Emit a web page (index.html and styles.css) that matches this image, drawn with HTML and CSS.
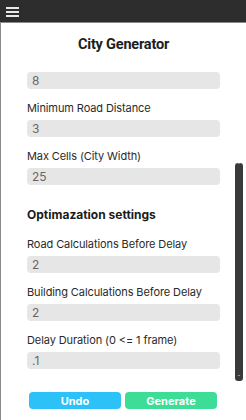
FILE: index.html
```html
<!DOCTYPE html>
<html lang="en">
<head>
    <meta charset="UTF-8">
    <meta name="viewport" content="width=device-width, initial-scale=1.0">
    <title>City Generator</title>
    <link rel="stylesheet" href="styles.css">
</head>
<body>
    <!-- Top bar -->
    <div class="topbar">
        <div class="menu-btn">
            <span></span><span></span><span></span>
        </div>
    </div>

    <div class="panel">
        <h1>City Generator</h1>

        <div class="settings">
            <input type="text" value="8">

            <label>Minimum Road Distance</label>
            <input type="text" value="3">

            <label>Max Cells (City Width)</label>
            <input type="text" value="25">

            <h2>Optimazation settings</h2>

            <label>Road Calculations Before Delay</label>
            <input type="text" value="2">

            <label>Building Calculations Before Delay</label>
            <input type="text" value="2">

            <label>Delay Duration (0 &lt;= 1 frame)</label>
            <input type="text" value=".1">
        </div>

        <div class="scrollbar"><span class="up">&#710;</span><span class="down">&#711;</span></div>

        <div class="actions">
            <button class="undo">Undo</button>
            <button class="generate">Generate</button>
        </div>
    </div>
</body>
</html>
```

FILE: styles.css
```css
* {
    margin: 0;
    padding: 0;
    box-sizing: border-box;
}

body {
    font-family: 'Inter', 'Open Sans', sans-serif;
    background-color: #fff;
    color: #222;
    width: 246px;
    height: 420px;
    overflow: hidden;
}

/* Top bar */
.topbar {
    height: 23px;
    background-color: #2d2d2d;
    border-bottom: 1px solid #8a8a8a;
    padding: 7px 0 0 6px;
}

.menu-btn {
    width: 13px;
    display: flex;
    flex-direction: column;
    gap: 2px;
}

.menu-btn span {
    display: block;
    height: 2px;
    background-color: #e8e8e8;
}

/* Main panel */
.panel {
    position: relative;
    height: 397px;
    border-left: 1px solid #8a8a8a;
}

h1 {
    font-family: 'Roboto', sans-serif;
    font-size: 14.5px;
    font-weight: bold;
    text-align: center;
    letter-spacing: -0.2px;
    padding-top: 13px;
    color: #1e1e1e;
}

.settings {
    display: flex;
    flex-direction: column;
    padding: 19px 0 0 26px;
    width: 219px;
}

.settings label {
    font-size: 11px;
    line-height: 14px;
    color: #2a2a2a;
    margin: 12px 0 5px;
    letter-spacing: -0.1px;
}

.settings input {
    height: 17px;
    border: none;
    border-radius: 4px;
    background-color: #e6e6e6;
    color: #666;
    font-family: inherit;
    font-size: 12px;
    padding: 0 5px;
    outline: none;
}

.settings h2 {
    font-size: 12px;
    font-weight: bold;
    line-height: 15px;
    margin: 22px 0 3px;
    color: #1a1a1a;
}

/* Fake scrollbar of the settings area */
.scrollbar {
    position: absolute;
    left: 234px;
    top: 140px;
    width: 8px;
    height: 218px;
    background-color: #3a3a3a;
    border-radius: 3px;
    display: flex;
    flex-direction: column;
    justify-content: space-between;
    align-items: center;
    color: #bbb;
    font-size: 8px;
    line-height: 6px;
}

.actions {
    display: flex;
    gap: 4px;
    padding: 23px 0 0 28px;
}

.actions button {
    width: 92px;
    height: 17px;
    border: none;
    border-radius: 4px;
    color: #fff;
    font-family: inherit;
    font-size: 11px;
    font-weight: bold;
}

.undo {
    background-color: #2cc2f7;
}

.generate {
    background-color: #3ddc97;
}
```
